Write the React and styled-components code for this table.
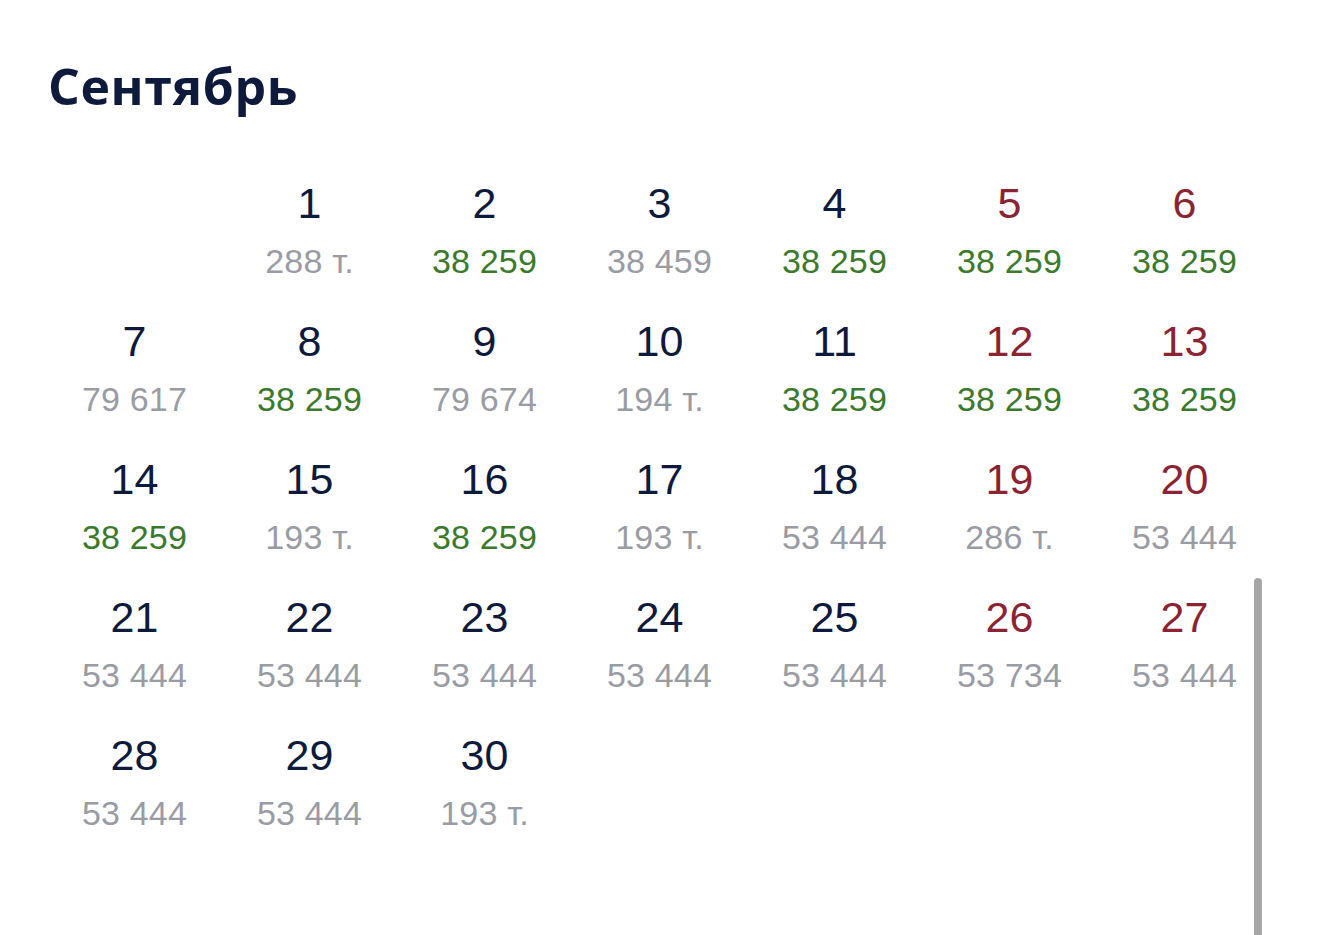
import React from 'react';
import styled, { createGlobalStyle } from 'styled-components';

const GlobalStyle = createGlobalStyle`
html, body {
  margin: 0;
  padding: 0;
  background: #ffffff;
}
body {
  font-family: "Liberation Sans", Arial, sans-serif;
  overflow: hidden;
}
`;

const Page = styled.div`
position: relative;
width: 1320px;
height: 935px;
overflow: hidden;
background: #ffffff;
`;

const Title = styled.h1`
margin: 0;
padding: 58px 0 0 48px;
font-family: "Open Sans", "Noto Sans", sans-serif;
font-weight: 700;
font-size: 50px;
line-height: 56px;
letter-spacing: 0.6px;
color: #0d1a3b;
`;

const Grid = styled.div`
display: grid;
grid-template-columns: repeat(7, 175px);
grid-auto-rows: 138px;
padding: 64px 0 0 47px;
`;

const Cell = styled.div`
display: flex;
flex-direction: column;
align-items: center;
`;

const Day = styled.div`
font-size: 43px;
line-height: 50px;
color: ${p => (p.$weekend ? '#8c2333' : '#0d1a3b')};
`;

const Price = styled.div`
margin-top: 13px;
font-size: 34px;
line-height: 40px;
letter-spacing: 0.2px;
color: ${p => (p.$cheap ? '#3b7a2c' : '#9a9ca4')};
`;

const Scrollbar = styled.div`
position: absolute;
right: 58px;
top: 578px;
width: 8px;
height: 380px;
border-radius: 4px;
background: #a6a6a6;
`;

const data = [
  ['288 т.', 0], ['38 259', 1], ['38 459', 0], ['38 259', 1], ['38 259', 1], ['38 259', 1],
  ['79 617', 0], ['38 259', 1], ['79 674', 0], ['194 т.', 0], ['38 259', 1], ['38 259', 1], ['38 259', 1],
  ['38 259', 1], ['193 т.', 0], ['38 259', 1], ['193 т.', 0], ['53 444', 0], ['286 т.', 0], ['53 444', 0],
  ['53 444', 0], ['53 444', 0], ['53 444', 0], ['53 444', 0], ['53 444', 0], ['53 734', 0], ['53 444', 0],
  ['53 444', 0], ['53 444', 0], ['193 т.', 0],
];

// 1 сентября — вторник, поэтому одна пустая ячейка в начале
const OFFSET = 1;

export default function App() {
  return (
    <Page>
      <GlobalStyle />
      <Title>Сентябрь</Title>
      <Grid>
        {Array.from({ length: OFFSET }).map((_, i) => <Cell key={'e' + i} />)}
        {data.map(([price, cheap], i) => {
          const col = (i + OFFSET) % 7;
          const weekend = col === 5 || col === 6;
          return (
            <Cell key={i}>
              <Day $weekend={weekend}>{i + 1}</Day>
              <Price $cheap={!!cheap}>{price}</Price>
            </Cell>
          );
        })}
      </Grid>
      <Scrollbar />
    </Page>
  );
}
